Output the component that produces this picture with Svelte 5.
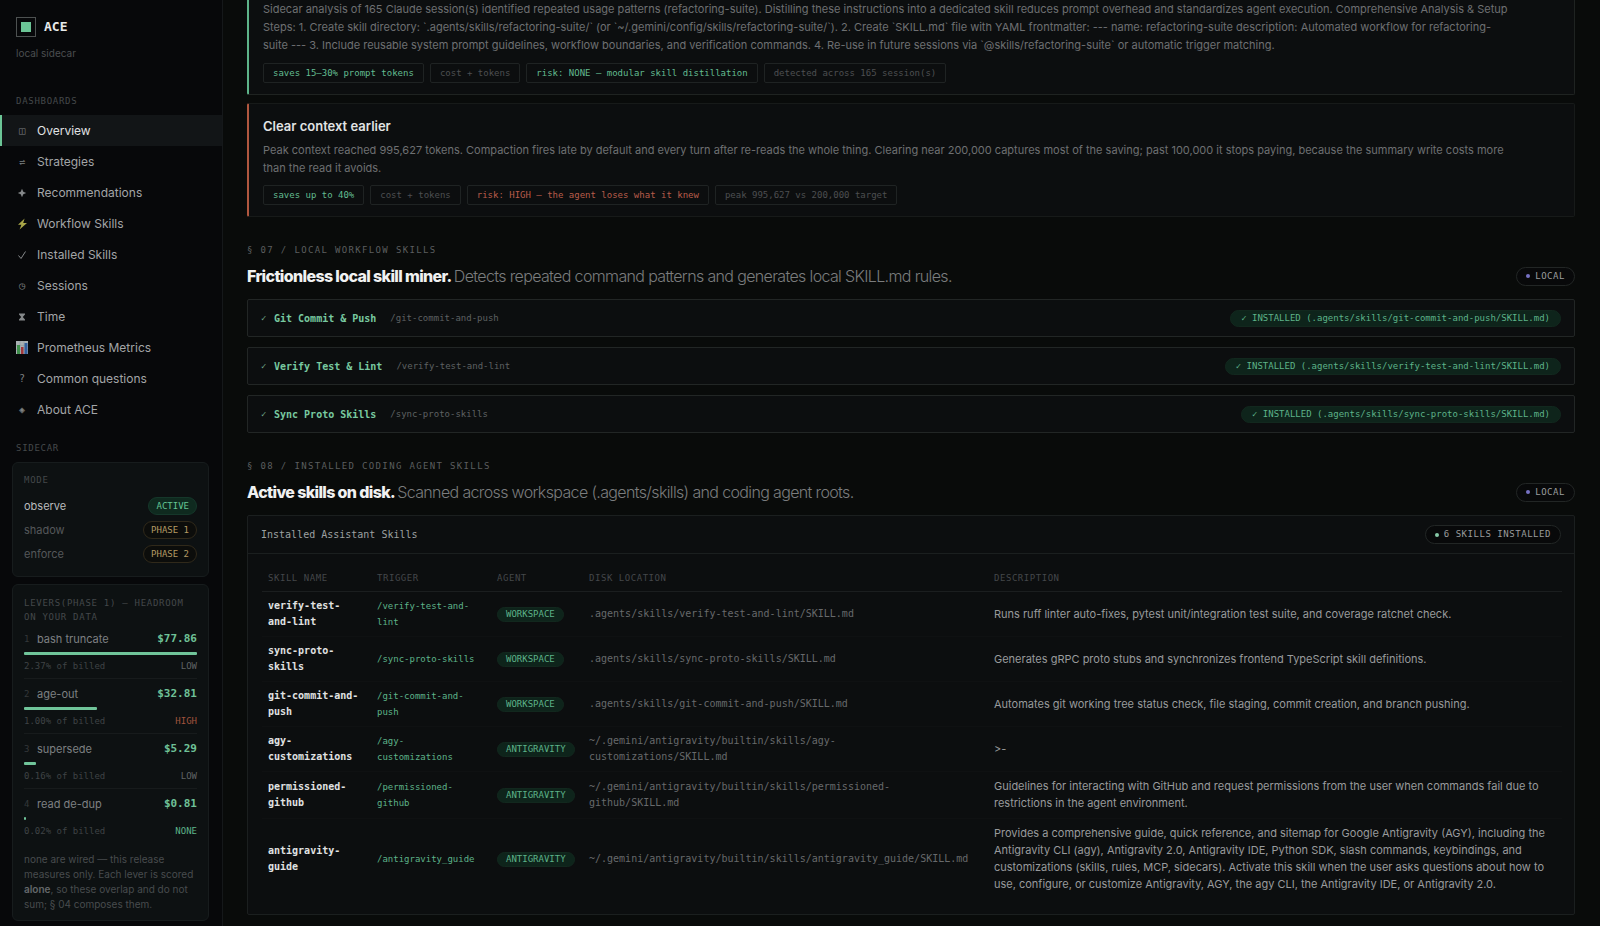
<script lang="ts">
	const navItems = [
		{ label: 'Overview', icon: '◫', active: true },
		{ label: 'Strategies', icon: '⇌' },
		{ label: 'Recommendations', icon: 'star' },
		{ label: 'Workflow Skills', icon: 'bolt' },
		{ label: 'Installed Skills', icon: 'check' },
		{ label: 'Sessions', icon: '◷' },
		{ label: 'Time', icon: 'hourglass' },
		{ label: 'Prometheus Metrics', icon: 'chart' },
		{ label: 'Common questions', icon: '?' },
		{ label: 'About ACE', icon: '◈' }
	];

	const modes = [
		{ name: 'observe', badge: 'ACTIVE', active: true },
		{ name: 'shadow', badge: 'PHASE 1' },
		{ name: 'enforce', badge: 'PHASE 2' }
	];

	const levers = [
		{ name: 'bash truncate', amount: 77.86, billed: '2.37%', risk: 'LOW' },
		{ name: 'age-out', amount: 32.81, billed: '1.00%', risk: 'HIGH' },
		{ name: 'supersede', amount: 5.29, billed: '0.16%', risk: 'LOW' },
		{ name: 'read de-dup', amount: 0.81, billed: '0.02%', risk: 'NONE' }
	];
	const maxAmount = Math.max(...levers.map((l) => l.amount));

	const workflows = [
		{ name: 'Git Commit & Push', slug: 'git-commit-and-push' },
		{ name: 'Verify Test & Lint', slug: 'verify-test-and-lint' },
		{ name: 'Sync Proto Skills', slug: 'sync-proto-skills' }
	];

	const skills = [
		{
			name: 'verify-test-and-lint',
			trigger: '/verify-test-and-lint',
			agent: 'WORKSPACE',
			path: '.agents/skills/verify-test-and-lint/SKILL.md',
			description:
				'Runs ruff linter auto-fixes, pytest unit/integration test suite, and coverage ratchet check.'
		},
		{
			name: 'sync-proto-skills',
			trigger: '/sync-proto-skills',
			agent: 'WORKSPACE',
			path: '.agents/skills/sync-proto-skills/SKILL.md',
			description:
				'Generates gRPC proto stubs and synchronizes frontend TypeScript skill definitions.'
		},
		{
			name: 'git-commit-and-push',
			trigger: '/git-commit-and-push',
			agent: 'WORKSPACE',
			path: '.agents/skills/git-commit-and-push/SKILL.md',
			description:
				'Automates git working tree status check, file staging, commit creation, and branch pushing.'
		},
		{
			name: 'agy-customizations',
			trigger: '/agy-customizations',
			agent: 'ANTIGRAVITY',
			path: '~/.gemini/antigravity/builtin/skills/agy-customizations/SKILL.md',
			description: '>-'
		},
		{
			name: 'permissioned-github',
			trigger: '/permissioned-github',
			agent: 'ANTIGRAVITY',
			path: '~/.gemini/antigravity/builtin/skills/permissioned-github/SKILL.md',
			description:
				'Guidelines for interacting with GitHub and request permissions from the user when commands fail due to restrictions in the agent environment.'
		},
		{
			name: 'antigravity-guide',
			trigger: '/antigravity_guide',
			agent: 'ANTIGRAVITY',
			path: '~/.gemini/antigravity/builtin/skills/antigravity_guide/SKILL.md',
			description:
				'Provides a comprehensive guide, quick reference, and sitemap for Google Antigravity (AGY), including the Antigravity CLI (agy), Antigravity 2.0, Antigravity IDE, Python SDK, slash commands, keybindings, and customizations (skills, rules, MCP, sidecars). Activate this skill when the user asks questions about how to use, configure, or customize Antigravity, AGY, the agy CLI, the Antigravity IDE, or Antigravity 2.0.'
		}
	];
</script>

<div class="layout">
	<aside class="sidebar">
		<div class="brand">
			<span class="logo"></span>
			<strong>ACE</strong>
		</div>
		<p class="tagline">local sidecar</p>

		<h2 class="side-label">DASHBOARDS</h2>
		<nav>
			{#each navItems as item}
				<a href="#{item.label.toLowerCase().replaceAll(' ', '-')}" class:active={item.active}>
					<span class="nav-icon" aria-hidden="true">
						{#if item.icon === 'bolt'}
							<svg width="11" height="12" viewBox="0 0 11 12">
								<path d="M7.6 0.6 1 6.7h3.4L2.6 11.4 10 4.9H6.2z" fill="#a9a648" />
							</svg>
						{:else if item.icon === 'star'}
							<svg width="10" height="10" viewBox="0 0 10 10">
								<path d="M5 0.8 6.3 3.7 9.2 5 6.3 6.3 5 9.2 3.7 6.3 0.8 5 3.7 3.7z" fill="#85888a" />
							</svg>
						{:else if item.icon === 'check'}
							<svg width="10" height="10" viewBox="0 0 10 10">
								<path d="M1.5 5.5 4 8.5 8.5 1.5" fill="none" stroke="#85888a" />
							</svg>
						{:else if item.icon === 'hourglass'}
							<svg width="10" height="10" viewBox="0 0 10 10">
								<path d="M2 1.5h6v1L5.8 5 8 7.5v1H2v-1L4.2 5 2 2.5z" fill="#85888a" />
							</svg>
						{:else if item.icon === 'chart'}
							<svg width="12" height="13" viewBox="0 0 12 13">
								<rect width="12" height="13" fill="#a9b0b3" />
								<path d="M0 4.5h12M0 8.5h12M4 0v13M8 0v13" stroke="#8b9498" stroke-width="0.5" />
								<rect x="1" y="4" width="3" height="9" fill="#3f8f4c" />
								<rect x="5" y="6" width="2.5" height="7" fill="#a3373b" />
								<rect x="8.5" y="2" width="3" height="11" fill="#315f9e" />
							</svg>
						{:else}
							{item.icon}
						{/if}
					</span>
					{item.label}
				</a>
			{/each}
		</nav>

		<h2 class="side-label">SIDECAR</h2>
		<section class="side-card">
			<h3>MODE</h3>
			{#each modes as mode}
				<div class="mode" class:active={mode.active}>
					<span>{mode.name}</span>
					<span class="mode-badge">{mode.badge}</span>
				</div>
			{/each}
		</section>

		<section class="side-card levers">
			<h3>LEVERS(PHASE 1) — HEADROOM ON YOUR DATA</h3>
			{#each levers as lever, i}
				<div class="lever">
					<div class="lever-head">
						<span class="index">{i + 1}</span>
						<span>{lever.name}</span>
						<b>${lever.amount.toFixed(2)}</b>
					</div>
					<div class="bar">
						<div class="fill" style="width: {(lever.amount / maxAmount) * 100}%"></div>
					</div>
					<div class="lever-meta">
						<span>{lever.billed} of billed</span>
						<span class="risk {lever.risk.toLowerCase()}">{lever.risk}</span>
					</div>
				</div>
			{/each}
			<p class="note">
				none are wired — this release measures only. Each lever is scored <b>alone</b>, so these
				overlap and do not sum; § 04 composes them.
			</p>
		</section>
	</aside>

	<main>
		<article class="rec continued">
			<p>
				Sidecar analysis of 165 Claude session(s) identified repeated usage patterns
				(refactoring-suite). Distilling these instructions into a dedicated skill reduces prompt
				overhead and standardizes agent execution. Comprehensive Analysis & Setup Steps: 1. Create
				skill directory: `.agents/skills/refactoring-suite/` (or
				`~/.gemini/config/skills/refactoring-suite/`). 2. Create `SKILL.md` file with YAML
				frontmatter: --- name: refactoring-suite description: Automated workflow for
				refactoring-suite --- 3. Include reusable system prompt guidelines, workflow boundaries, and
				verification commands. 4. Re-use in future sessions via `@skills/refactoring-suite` or
				automatic trigger matching.
			</p>
			<div class="chips">
				<span class="chip good">saves 15–30% prompt tokens</span>
				<span class="chip">cost + tokens</span>
				<span class="chip good">risk: NONE — modular skill distillation</span>
				<span class="chip">detected across 165 session(s)</span>
			</div>
		</article>

		<article class="rec danger">
			<h3>Clear context earlier</h3>
			<p>
				Peak context reached 995,627 tokens. Compaction fires late by default and every turn after
				re-reads the whole thing. Clearing near 200,000 captures most of the saving; past 100,000 it
				stops paying, because the summary write costs more than the read it avoids.
			</p>
			<div class="chips">
				<span class="chip good">saves up to 40%</span>
				<span class="chip">cost + tokens</span>
				<span class="chip bad">risk: HIGH — the agent loses what it knew</span>
				<span class="chip">peak 995,627 vs 200,000 target</span>
			</div>
		</article>

		<section>
			<div class="eyebrow">§ 07 / LOCAL WORKFLOW SKILLS</div>
			<header class="section-head">
				<h2>Frictionless local skill miner. <span>Detects repeated command patterns and generates local SKILL.md rules.</span></h2>
				<span class="badge"><i class="dot"></i>LOCAL</span>
			</header>
			<div class="workflows">
				{#each workflows as flow}
					<div class="workflow">
						<span class="check">✓</span>
						<strong>{flow.name}</strong>
						<code>/{flow.slug}</code>
						<span class="pill">✓ INSTALLED (.agents/skills/{flow.slug}/SKILL.md)</span>
					</div>
				{/each}
			</div>
		</section>

		<section>
			<div class="eyebrow">§ 08 / INSTALLED CODING AGENT SKILLS</div>
			<header class="section-head">
				<h2>Active skills on disk. <span>Scanned across workspace (.agents/skills) and coding agent roots.</span></h2>
				<span class="badge"><i class="dot"></i>LOCAL</span>
			</header>
			<div class="panel">
				<div class="panel-head">
					<h3>Installed Assistant Skills</h3>
					<span class="badge"><i class="dot green"></i>6 SKILLS INSTALLED</span>
				</div>
				<div class="panel-body">
					<table>
						<thead>
							<tr>
								<th class="name">SKILL NAME</th>
								<th class="trigger">TRIGGER</th>
								<th class="agent">AGENT</th>
								<th class="path">DISK LOCATION</th>
								<th>DESCRIPTION</th>
							</tr>
						</thead>
						<tbody>
							{#each skills as skill}
								<tr>
									<td class="name">{skill.name}</td>
									<td class="trigger">{skill.trigger}</td>
									<td class="agent"><span class="pill">{skill.agent}</span></td>
									<td class="path">{skill.path}</td>
									<td class="description">{skill.description}</td>
								</tr>
							{/each}
						</tbody>
					</table>
				</div>
			</div>
		</section>
	</main>
</div>

<style>
	:global(body) {
		background: #090b0a;
	}

	.layout {
		--mono: 'DejaVu Sans Mono', monospace;
		--green: #6bc596;
		--line: #1b1f1f;
		display: flex;
		min-height: 100vh;
		color: #a3a5a7;
		font-family: Inter, sans-serif;
		font-size: 11px;
	}

	.layout * {
		box-sizing: border-box;
	}

	h2,
	h3,
	p {
		margin: 0;
	}

	.sidebar {
		flex: 0 0 223px;
		padding: 17px 0 0;
		background: #07080a;
		border-right: 1px solid #15181a;
	}

	.brand {
		display: flex;
		align-items: center;
		gap: 8px;
		padding: 0 16px;

		& strong {
			color: #e8eaea;
			font: bold 13px/20px var(--mono);
		}
	}

	.logo {
		display: grid;
		place-items: center;
		width: 20px;
		height: 20px;
		border: 1px solid #4d5151;

		&::before {
			content: '';
			width: 10px;
			height: 10px;
			background: var(--green);
		}
	}

	.tagline {
		margin-top: 9px;
		padding: 0 16px;
		color: #4b4e50;
		font-size: 10px;
		line-height: 14px;
	}

	.side-label {
		margin: 35px 16px 8px;
		color: #45484a;
		font: 9px/12px var(--mono);
		letter-spacing: 0.08em;
	}

	nav {
		margin-bottom: -18px;

		& a {
			display: flex;
			align-items: center;
			gap: 9px;
			padding: 0 14px;
			border-left: 2px solid transparent;
			color: #a3a5a7;
			font-size: 12px;
			line-height: 31px;
			text-decoration: none;

			&.active {
				background: #121517;
				border-left-color: var(--green);
				color: #e0e2e3;
			}
		}
	}

	.nav-icon {
		display: flex;
		align-items: center;
		justify-content: center;
		width: 12px;
		height: 31px;
		color: #7d8082;
		font: 10px/31px 'DejaVu Sans Mono', 'DejaVu Sans', sans-serif;
	}

	.side-card {
		margin: 0 13px 7px 12px;
		padding: 11px 11px 10px;
		background: #0d1112;
		border: 1px solid #171c1d;
		border-radius: 6px;

		& h3 {
			margin-bottom: 8px;
			color: #44484a;
			font: 9px/12px var(--mono);
			letter-spacing: 0.08em;
		}
	}

	.mode {
		display: flex;
		align-items: center;
		justify-content: space-between;
		height: 24px;
		color: #55585a;

		&.active {
			color: #b9bbbc;

			& .mode-badge {
				color: #63c493;
				background: #0f2a1f;
				border-color: #15372a;
			}
		}
	}

	.mode-badge {
		padding: 0 7px;
		border: 1px solid #30291a;
		border-radius: 9px;
		background: #0c0d0b;
		color: #b39a63;
		font: 9px/16px var(--mono);
	}

	.levers {
		padding-bottom: 8px;
		margin-bottom: 5px;

		& h3 {
			margin-bottom: 7px;
			line-height: 14px;
		}
	}

	.lever + .lever {
		margin-top: 6px;
		padding-top: 7px;
		border-top: 1px solid #171b1c;
	}

	.lever-head {
		display: flex;
		align-items: center;
		line-height: 16px;
		color: #7d8082;

		& .index {
			width: 13px;
			color: #34383a;
			font-family: var(--mono);
			font-size: 9px;
		}

		& b {
			margin-left: auto;
			color: #6fc197;
			font-family: var(--mono);
		}
	}

	.bar {
		height: 3px;
		margin: 5px 0;

		& .fill {
			height: 100%;
			background: #70c59a;
			border-radius: 1px;
		}
	}

	.lever-meta {
		display: flex;
		justify-content: space-between;
		color: #3f4345;
		font: 9px/12px var(--mono);
	}

	.risk {
		color: #606365;

		&.high {
			color: #a1543d;
		}

		&.none {
			color: #5db48a;
		}
	}

	.note {
		margin-top: 15px;
		color: #484c4e;
		font-size: 10px;
		line-height: 15px;

		& b {
			color: #64686a;
			font-weight: 600;
		}
	}

	main {
		flex: 1;
		min-width: 0;
		padding: 0 25px 8px 24px;
	}

	.rec {
		margin-bottom: 8px;
		padding: 12px 14px 11px;
		background: #0c0e0f;
		border: 1px solid #171a19;
		border-left: 2px solid #5db389;
		border-radius: 2px;

		&.continued {
			padding-top: 0;
			border-top: 0;
			border-color: #1f2321;
			border-left-color: #5db389;
			border-radius: 0 0 2px 2px;
		}

		&.danger {
			border-left-color: #b0573f;
		}

		& h3 {
			margin-bottom: 5px;
			color: #e2e4e4;
			font-size: 13px;
			font-weight: 600;
			line-height: 20px;
		}

		& p {
			padding-right: 48px;
			color: #6e7072;
			line-height: 18px;
		}
	}

	.chips {
		display: flex;
		flex-wrap: wrap;
		gap: 6px;
		margin-top: 9px;
	}

	.danger .chips {
		margin-top: 8px;
	}

	.chip {
		padding: 0 9px;
		border: 1px solid #1f2323;
		border-radius: 2px;
		color: #4c4f51;
		font: 9px/18px var(--mono);

		&.good {
			color: #62bb90;
		}

		&.bad {
			color: #b85c4a;
		}
	}

	.eyebrow {
		margin-top: 27px;
		color: #5b5e5f;
		font: 9px/12px var(--mono);
		letter-spacing: 0.15em;
	}

	.section-head {
		display: flex;
		align-items: center;
		justify-content: space-between;
		margin: 9px 0 12px;

		& h2 {
			color: #f0f1f1;
			font-size: 16px;
			font-weight: 800;
			line-height: 22px;
			letter-spacing: -0.04em;
		}

		& h2 span {
			color: #7a7c7d;
			font-weight: 300;
		}
	}

	.badge {
		display: flex;
		align-items: center;
		gap: 5px;
		padding: 0 9px;
		border: 1px solid #222625;
		border-radius: 10px;
		background: #08090a;
		color: #9a9c9d;
		font: 9px/17px var(--mono);
		letter-spacing: 0.06em;
		white-space: nowrap;
	}

	.dot {
		width: 4px;
		height: 4px;
		border-radius: 50%;
		background: #7672c4;

		&.green {
			background: #86c9a7;
		}
	}

	.workflows {
		display: grid;
		gap: 10px;
		margin-bottom: 27px;
	}

	.workflow {
		display: flex;
		align-items: center;
		height: 38px;
		padding: 0 13px;
		background: #0c0e0f;
		border: 1px solid #222625;
		border-radius: 2px;
		font-family: var(--mono);

		& .check {
			width: 13px;
			color: #6fa78b;
			font-size: 9px;
		}

		& strong {
			margin-right: 14px;
			color: #78c9a0;
			font-size: 10px;
		}

		& code {
			color: #5e6162;
			font-family: inherit;
			font-size: 9px;
		}

		& .pill {
			margin-left: auto;
			padding: 1px 10px;
		}
	}

	.pill {
		display: inline-block;
		padding: 0 8px;
		border: 1px solid #12281e;
		border-radius: 9px;
		background: #0e241b;
		color: #5db389;
		font: 9px/13px var(--mono);
		white-space: nowrap;
	}

	.panel {
		background: #0c0e0f;
		border: 1px solid var(--line);
		border-radius: 2px;
	}

	.panel-head {
		display: flex;
		align-items: center;
		justify-content: space-between;
		height: 38px;
		padding: 0 13px;
		border-bottom: 1px solid var(--line);

		& h3 {
			color: #9da0a1;
			font: 10px/16px var(--mono);
		}
	}

	.panel-body {
		padding: 11px 12px 15px 14px;
	}

	table {
		width: 100%;
		table-layout: fixed;
		border-collapse: collapse;
	}

	th {
		padding: 7px 12px 7px 6px;
		border-bottom: 1px solid #1b1e1f;
		color: #44474a;
		font: 9px/12px var(--mono);
		letter-spacing: 0.06em;
		text-align: left;

		&.name {
			width: 109px;
		}

		&.trigger {
			width: 120px;
		}

		&.agent {
			width: 92px;
		}

		&.path {
			width: 405px;
		}
	}

	td {
		padding: 6px 12px 6px 6px;
		border-bottom: 1px solid #0f1112;
		font: 10px/16px var(--mono);
		vertical-align: middle;

		&.name {
			color: #e0e2e2;
			font-weight: bold;
		}

		&.trigger {
			color: #5db389;
			font-size: 9px;
		}

		&.agent {
			padding-right: 0;
		}

		&.path {
			padding-right: 18px;
			color: #67696b;
		}

		&.description {
			padding-right: 6px;
			color: #989a9c;
			font: 11px/17px Inter, sans-serif;
		}
	}

	tbody tr:last-child td {
		border-bottom: 0;
	}
</style>
